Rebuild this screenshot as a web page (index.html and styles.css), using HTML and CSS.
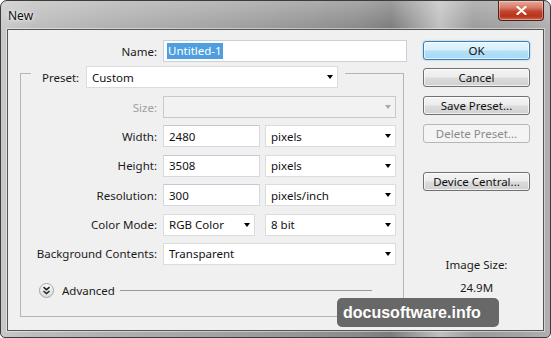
FILE: index.html
```html
<!DOCTYPE html>
<html>
<head>
<meta charset="utf-8">
<link rel="stylesheet" href="styles.css">
</head>
<body>
<div class="window">
  <div class="titlebar">
    <span class="title">New</span>
    <div class="close"><svg width="11" height="9" viewBox="0 0 11 9"><path d="M1.5 1 L9.5 8 M9.5 1 L1.5 8" stroke="#fff" stroke-width="2.2" stroke-linecap="round"/></svg></div>
  </div>
  <div class="client">
    <div class="main">
      <div class="name-row">
        <span class="lbl name-lbl">Name:</span>
        <div class="field input name-field"><span class="sel">Untitled-1</span></div>
      </div>
      <div class="group">
        <div class="group-head">
          <span class="head-lbl">Preset:</span>
          <div class="field select preset">Custom<i class="arrow"></i></div>
        </div>
        <div class="rows">
          <div class="row">
            <span class="lbl off">Size:</span>
            <div class="field select disabled wide"><i class="arrow light"></i></div>
          </div>
          <div class="row">
            <span class="lbl">Width:</span>
            <div class="field input num">2480</div>
            <div class="field select unit">pixels<i class="arrow"></i></div>
          </div>
          <div class="row">
            <span class="lbl">Height:</span>
            <div class="field input num">3508</div>
            <div class="field select unit">pixels<i class="arrow"></i></div>
          </div>
          <div class="row">
            <span class="lbl">Resolution:</span>
            <div class="field input num">300</div>
            <div class="field select unit">pixels/inch<i class="arrow"></i></div>
          </div>
          <div class="row">
            <span class="lbl">Color Mode:</span>
            <div class="field select mode">RGB Color<i class="arrow"></i></div>
            <div class="field select unit">8 bit<i class="arrow"></i></div>
          </div>
          <div class="row">
            <span class="lbl">Background Contents:</span>
            <div class="field select wide">Transparent<i class="arrow"></i></div>
          </div>
        </div>
        <div class="advanced">
          <span class="adv-btn"><svg width="9" height="9" viewBox="0 0 9 9"><path d="M1.5 1.2 L4.5 3.7 L7.5 1.2 M1.5 5 L4.5 7.5 L7.5 5" fill="none" stroke="#222" stroke-width="1.5"/></svg></span>
          <span class="adv-text">Advanced</span>
          <span class="adv-line"></span>
        </div>
      </div>
    </div>
    <div class="side">
      <div class="btn ok">OK</div>
      <div class="btn b2">Cancel</div>
      <div class="btn b3">Save Preset...</div>
      <div class="btn b4 disabled">Delete Preset...</div>
      <div class="btn b5">Device Central...</div>
      <div class="info">
        <div class="info-lbl">Image Size:</div>
        <div class="info-val">24.9M</div>
      </div>
    </div>
  </div>
  <div class="watermark">docusoftware.info</div>
</div>
</body>
</html>
```
FILE: styles.css
```css
* { box-sizing: border-box; }
html, body { margin: 0; padding: 0; background: #fff; }
body { font-family: "Noto Sans", "Open Sans", sans-serif; font-size: 11.5px; color: #1b1b1b; }

.window {
  position: relative;
  width: 551px;
  height: 338px;
  border: 1px solid #3c3c3c;
  border-radius: 7px 7px 5px 5px;
  padding: 0 6px 6px 6px;
  display: flex;
  flex-direction: column;
  background:
    linear-gradient(180deg, rgba(255,255,255,0.25) 0, rgba(255,255,255,0) 28px),
    linear-gradient(90deg, #c9c9c9 0, #bdbdbd 6%, #b0b0b0 20%, #a2a2a2 40%, #959595 55%, #8a8a8a 65%, #7c7c7c 71%, #aaaaaa 77%, #c0c0c0 80%, #9c9c9c 86%, #a3a3a3 94%, #b0b0b0 100%);
}

.titlebar {
  height: 28px;
  display: flex;
  align-items: flex-start;
}
.title {
  margin: 8px 0 0 1px;
  font-size: 12px;
  line-height: 14px;
  color: #111;
  text-shadow: 0 0 6px rgba(255,255,255,0.9), 0 0 3px rgba(255,255,255,0.8);
}
.close {
  margin-left: auto;
  width: 46px;
  height: 20px;
  border: 1px solid #4e2219;
  border-top: none;
  border-radius: 0 0 4px 4px;
  background: linear-gradient(180deg, #e9a99a 0, #d77a66 35%, #c2432c 55%, #b8321b 80%, #cf6a50 100%);
  box-shadow: inset 0 0 0 1px rgba(255,255,255,0.35);
  display: flex;
  align-items: center;
  justify-content: center;
}

.client {
  flex: 1;
  display: flex;
  background: #f0f0f0;
  border: 1px solid #555;
  box-shadow: 0 0 0 1px rgba(255,255,255,0.45);
}

.main {
  width: 396px;
  flex-shrink: 0;
  display: flex;
  flex-direction: column;
}

.lbl {
  text-align: right;
  white-space: nowrap;
  flex-shrink: 0;
}
.lbl.off { color: #a0a0a0; }

.name-row {
  margin-top: 10px;
  display: flex;
  align-items: center;
  gap: 6px;
  height: 22px;
}
.name-lbl { width: 149px; }

.field {
  flex-shrink: 0;
  height: 22px;
  background: #fff;
  display: flex;
  align-items: center;
  padding-left: 5px;
  position: relative;
  color: #111;
  white-space: nowrap;
}
.input {
  border: 1px solid #d3d9df;
  border-top-color: #c2c9d0;
}
.select {
  border: 1px solid #dcdcdc;
}
.select.disabled {
  background: #f2f2f2;
  border-color: #c9c9c9;
}
.arrow {
  position: absolute;
  right: 4px;
  top: 8px;
  width: 0;
  height: 0;
  border-left: 3.5px solid transparent;
  border-right: 3.5px solid transparent;
  border-top: 4px solid #000;
}
.arrow.light { border-top-color: #a9a9a9; }

.name-field { width: 244px; padding-left: 3px; border-color: #c8d2dc; }
.sel {
  background: #4f9fe0;
  color: #fff;
  padding: 0 1px;
  line-height: 16px;
}

.group {
  margin: 11px 0 0 12px;
  width: 384px;
  height: 244px;
  border: 1px solid #b5b5b5;
  display: flex;
  flex-direction: column;
}
.group-head {
  margin: -8px 0 0 10px;
  padding: 0 7px 0 11px;
  background: #f0f0f0;
  display: flex;
  align-items: center;
  width: fit-content;
}
.head-lbl { width: 44px; }
.preset { width: 252px; }

.rows {
  margin-top: 8px;
  display: flex;
  flex-direction: column;
  gap: 7.4px;
}
.row {
  display: flex;
  align-items: center;
  height: 22px;
}
.row .lbl { width: 136px; margin-right: 6px; }
.wide { width: 233px; }
.num { width: 97px; margin-right: 5px; }
.unit { width: 131px; }
.mode { width: 92px; margin-right: 10px; }

.advanced {
  margin-top: 18px;
  display: flex;
  align-items: center;
  height: 16px;
}
.adv-btn {
  margin-left: 18px;
  width: 15px;
  height: 15px;
  border-radius: 50%;
  border: 1px solid #a5a5a5;
  background: linear-gradient(180deg, #fbfbfb, #dcdcdc);
  display: flex;
  align-items: center;
  justify-content: center;
}
.adv-text { margin-left: 8px; }
.adv-line {
  margin-left: 5px;
  width: 252px;
  height: 1px;
  background: #9a9a9a;
}

.side {
  flex: 1;
  display: flex;
  flex-direction: column;
  padding: 11px 12px 0 19px;
}
.btn {
  width: 107px;
  height: 19px;
  border: 1px solid #707070;
  border-radius: 3px;
  background: linear-gradient(180deg, #f4f4f4 0, #ececec 48%, #dcdcdc 52%, #d0d0d0 100%);
  box-shadow: inset 0 0 0 1px rgba(255,255,255,0.7);
  display: flex;
  align-items: center;
  justify-content: center;
  color: #111;
  white-space: nowrap;
}
.btn.ok {
  border-color: #3c7fb1;
  background: linear-gradient(180deg, #e8f6fd 0, #d4effc 48%, #b4e0f8 52%, #a6d8f4 100%);
  box-shadow: inset 0 0 0 1px rgba(255,255,255,0.6), 0 0 2px rgba(60,160,220,0.6);
}
.b2 { margin-top: 8px; }
.b3 { margin-top: 9px; }
.b4 { margin-top: 9px; }
.btn.disabled {
  border-color: #b4b8bb;
  background: #f4f4f4;
  color: #8a8a8a;
  box-shadow: none;
}
.b5 { margin-top: 29px; }

.info {
  margin-top: 66px;
  display: flex;
  flex-direction: column;
  align-items: center;
  width: 107px;
  line-height: 16px;
}
.info-val { margin-top: 7px; }

.watermark {
  position: absolute;
  left: 336px;
  top: 297px;
  width: 162px;
  height: 29px;
  border-radius: 5px;
  background: rgba(98,98,98,0.96);
  color: #fff;
  font-family: "Liberation Sans", Arial, sans-serif;
  font-weight: bold;
  font-size: 16px;
  line-height: 29px;
  padding-left: 6px;
}
```
